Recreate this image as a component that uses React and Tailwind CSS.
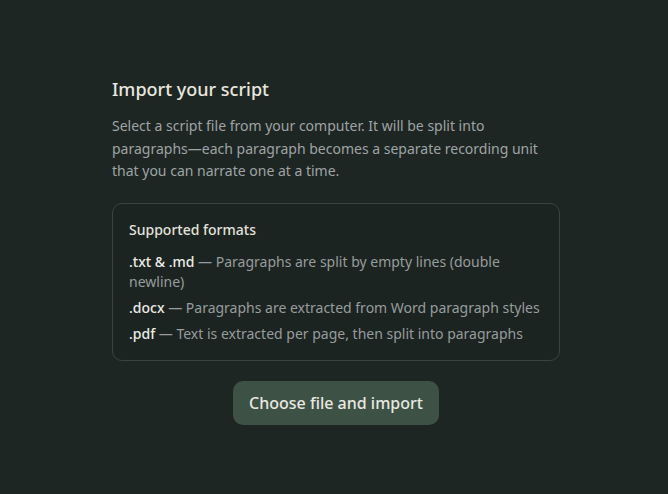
export default function App() {
  return (
    <div className="min-h-screen w-full bg-[#1e2624] flex items-center justify-center pt-[6px] pl-[4px]" style={{ fontFamily: '"Noto Sans", sans-serif' }}>
      <div className="w-[448px] flex flex-col">
        <h1 className="text-[18px] leading-7 font-medium text-[#e8e6df] mb-3">Import your script</h1>
        <p className="text-[14px] leading-[22.5px] text-[#9ea3a3] mb-5">
          Select a script file from your computer. It will be split into paragraphs—each paragraph becomes a separate recording unit that you can narrate one at a time.
        </p>
        <div className="border border-[#3a4341] rounded-[10px] bg-[#1c2422] p-4">
          <div className="text-[14px] leading-5 font-medium text-[#e3e2dc] mb-3">Supported formats</div>
          <div className="flex flex-col gap-[6px] text-[14px] leading-5 text-[#979c9c]">
            <p><span className="font-medium text-[#ecebe6]">.txt &amp; .md</span> — Paragraphs are split by empty lines (double newline)</p>
            <p><span className="font-medium text-[#ecebe6]">.docx</span> — Paragraphs are extracted from Word paragraph styles</p>
            <p><span className="font-medium text-[#ecebe6]">.pdf</span> — Text is extracted per page, then split into paragraphs</p>
          </div>
        </div>
        <div className="flex justify-center mt-5">
          <button className="bg-[#3e5145] text-[#e8e8e0] text-[16px] leading-6 font-medium px-4 py-2.5 rounded-[10px]">Choose file and import</button>
        </div>
      </div>
    </div>
  );
}
